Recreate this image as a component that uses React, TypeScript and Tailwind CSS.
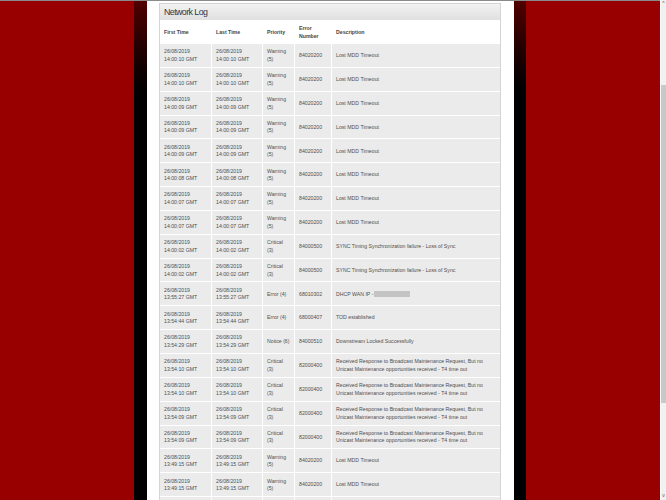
import React from "react";

const lost = "Lost MDD Timeout";
const sync = "SYNC Timing Synchronization failure - Loss of Sync";
const t4 = "Received Response to Broadcast Maintenance Request, But no Unicast Maintenance opportunities received - T4 time out";

const rows = [
  ["14:00:10", "Warning (5)", "84020200", lost],
  ["14:00:10", "Warning (5)", "84020200", lost],
  ["14:00:09", "Warning (5)", "84020200", lost],
  ["14:00:09", "Warning (5)", "84020200", lost],
  ["14:00:09", "Warning (5)", "84020200", lost],
  ["14:00:08", "Warning (5)", "84020200", lost],
  ["14:00:07", "Warning (5)", "84020200", lost],
  ["14:00:07", "Warning (5)", "84020200", lost],
  ["14:00:02", "Critical (3)", "84000500", sync],
  ["14:00:02", "Critical (3)", "84000500", sync],
  ["13:55:27", "Error (4)", "68010302", "DHCP WAN IP -"],
  ["13:54:44", "Error (4)", "68000407", "TOD established"],
  ["13:54:29", "Notice (6)", "84000510", "Downstream Locked Successfully"],
  ["13:54:10", "Critical (3)", "82000400", t4],
  ["13:54:10", "Critical (3)", "82000400", t4],
  ["13:54:09", "Critical (3)", "82000400", t4],
  ["13:54:09", "Critical (3)", "82000400", t4],
  ["13:49:15", "Warning (5)", "84020200", lost],
  ["13:49:15", "Warning (5)", "84020200", lost],
  ["13:49:15", "Warning (5)", "84020200", lost],
];

const cols = "grid grid-cols-[52px_51px_32px_37px_169px]";
const cell = "flex items-center pl-[4px] pt-px border-r border-white last:border-r-0";

function Row({ time, priority, code, text }: { time: string; priority: string; code: string; text: string }) {
  return (
    <div className={`${cols} h-[23.85px] shrink-0 bg-[#ebebeb] border-b border-white text-[#4f4f4f]`}>
      <div className={cell}>
        <div>26/08/2019<br />{time} GMT</div>
      </div>
      <div className={cell}>
        <div>26/08/2019<br />{time} GMT</div>
      </div>
      <div className={`${cell} pr-[4px]`}>{priority}</div>
      <div className={cell}>{code}</div>
      <div className={`${cell} pr-[12px]`}>
        {text}
        {text === "DHCP WAN IP -" && <span className="ml-px inline-block h-[6px] w-[36px] bg-[#c4c4c4] blur-[0.5px]" />}
      </div>
    </div>
  );
}

export default function App() {
  return (
    <div className="flex h-[500px] w-[666px] overflow-hidden font-['Liberation_Sans',Arial,sans-serif]">
      {/* Page */}
      <div className="flex min-w-0 flex-1 flex-col">
        <div className="h-px shrink-0 bg-[#8a8a8a]" />
        <div className="flex min-h-0 flex-1 bg-[#980000]">
          <div className="w-[134px] shrink-0" />
          <div className="w-[13px] shrink-0 bg-gradient-to-b from-[#520000] to-black to-[23%]" />

          {/* Content */}
          <div className="w-[367px] shrink-0 overflow-hidden bg-white pl-[12px] pr-[13px] pt-[2px]">
            <div className="h-[600px] border-x border-t border-[#d4d4d4]">
              <div className="flex h-[16px] items-center bg-gradient-to-b from-[#f2f2f2] to-[#e0e0e0] pl-[4px] pt-px text-[8.8px] tracking-[-0.55px] text-[#2c3545]">
                Network Log
              </div>
              <div className="text-[5.2px] leading-[7.6px]">
                <div className={`${cols} h-[24px] bg-white font-bold text-[#444444]`}>
                  <div className={`${cell} border-[#f0f0f0]`}>First Time</div>
                  <div className={`${cell} border-[#f0f0f0]`}>Last Time</div>
                  <div className={`${cell} border-[#f0f0f0]`}>Priority</div>
                  <div className={`${cell} border-[#f0f0f0]`}>Error<br />Number</div>
                  <div className={cell}>Description</div>
                </div>
                {rows.map((r, i) => (
                  <Row key={i} time={r[0]} priority={r[1]} code={r[2]} text={r[3]} />
                ))}
              </div>
            </div>
          </div>

          <div className="w-[12px] shrink-0 bg-gradient-to-b from-[#520000] to-black to-[23%]" />
          <div className="flex-1" />
        </div>
      </div>

      {/* Scrollbar */}
      <div className="flex w-[6px] shrink-0 flex-col border-l border-white bg-[#f1f1f1]">
        <div className="flex h-[7px] items-center justify-center text-[5px] leading-none text-[#505050]">^</div>
        <div className="mt-[78px] h-[318px] bg-[#c8c8c8]" />
        <div className="mt-auto h-[7px] text-center text-[5px] leading-none text-[#505050]">v</div>
      </div>
    </div>
  );
}
